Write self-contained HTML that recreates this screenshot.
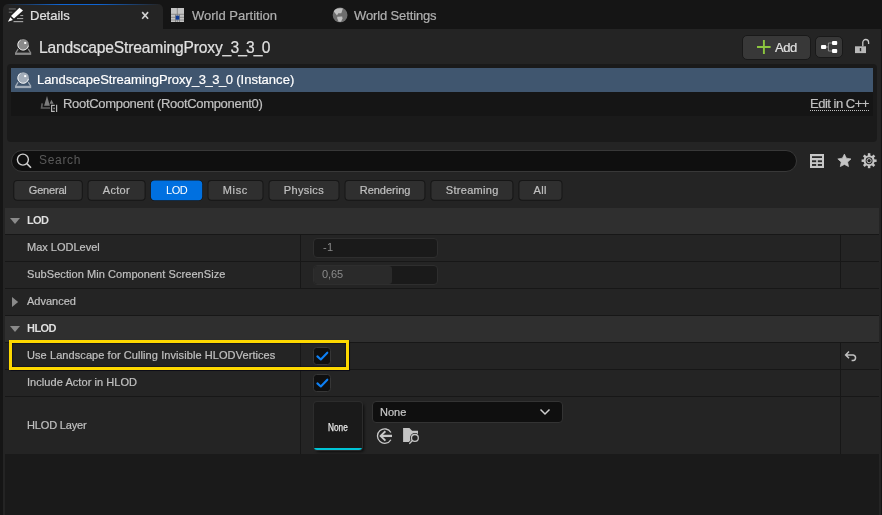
<!DOCTYPE html>
<html><head><meta charset="utf-8">
<style>
*{box-sizing:border-box;margin:0;padding:0}
html,body{width:882px;height:515px;overflow:hidden;background:#151515}
body{will-change:transform;position:relative;font-family:"Liberation Sans",sans-serif;color:#c0c0c0;font-size:12px}
.abs{position:absolute}
.t{position:absolute;white-space:nowrap;line-height:1;-webkit-text-stroke:0.2px}
svg{position:absolute;left:0;top:0;overflow:visible}
.fbt{top:185px;font-size:11px}
.row{position:absolute;left:5px;width:874px;height:26px;background:#242424}
.cat{background:#2f2f2f}
.lbl{position:absolute;left:22px;top:7px;font-size:11px;line-height:1;white-space:nowrap;color:#c0c0c0;-webkit-text-stroke:0.2px}
.cat .lbl{font-weight:bold;color:#e0e0e0;-webkit-text-stroke:0}
.vd{position:absolute;top:235px;width:1px;background:#171717}
.inp{position:absolute;left:313px;width:125px;height:20px;background:#1a1a1a;border:1px solid #2e2e2e;border-radius:4px;overflow:hidden}
.cb{position:absolute;left:313px;width:18px;height:18px;background:#0f0f0f;border:1px solid #363636;border-radius:3.5px}
</style></head><body>
<!-- panel bg -->
<div class="abs" style="left:3px;top:29px;width:878px;height:486px;background:#242424"></div>
<!-- active tab -->
<div class="abs" style="left:3px;top:4px;width:160px;height:26px;background:#242424;border-radius:5px 5px 0 0"></div>
<div class="abs" style="left:6px;top:4px;width:154px;height:1px;background:linear-gradient(90deg,rgba(15,100,210,0),#0f64d2 35%,#0f64d2 60%,rgba(15,100,210,0))"></div>
<span class="t" style="left:30px;top:9px;font-size:13px;color:#e0e0e0">Details</span>
<span class="t" style="left:192px;top:9px;font-size:13px;color:#b0b0b0">World Partition</span>
<span class="t" style="left:354px;top:9px;font-size:13px;color:#b0b0b0;letter-spacing:-0.13px">World Settings</span>
<!-- title -->
<span class="t" style="left:39px;top:40px;font-size:15.6px;color:#e0e0e0"><span style="letter-spacing:-0.16px">LandscapeStreamingProxy</span><span style="letter-spacing:-0.85px">_3_3_0</span></span>
<!-- Add button -->
<div class="abs" style="left:742px;top:35px;width:69px;height:25px;background:#383838;border:1px solid #191919;border-radius:5px"></div>
<span class="t" style="left:775px;top:41px;font-size:13px;color:#e0e0e0;letter-spacing:-0.4px">Add</span>
<div class="abs" style="left:815px;top:36px;width:28px;height:22px;background:#383838;border:1px solid #191919;border-radius:5px"></div>
<!-- tree box -->
<div class="abs" style="left:7px;top:64px;width:870px;height:78px;background:#1a1a1a;border-radius:4px"></div>
<div class="abs" style="left:11px;top:68px;width:862px;height:24px;background:#40566f"></div>
<div class="abs" style="left:11px;top:92px;width:862px;height:24px;background:#151515"></div>
<span class="t" style="left:37px;top:73px;font-size:13px;color:#ffffff"><span style="letter-spacing:-0.05px">LandscapeStreamingProxy</span><span style="letter-spacing:-0.47px">_3_3_0</span><span style="letter-spacing:0.03px"> (Instance)</span></span>
<span class="t" style="left:63px;top:97px;font-size:13px;color:#c0c0c0;letter-spacing:-0.31px">RootComponent (RootComponent0)</span>
<span class="t" style="left:810px;top:97px;font-size:13px;color:#c0c0c0;letter-spacing:-0.5px">Edit in C++</span>
<div class="abs" style="left:810px;top:110px;width:59px;height:0;border-top:1px dotted #c0c0c0"></div>
<!-- search -->
<div class="abs" style="left:11px;top:150px;width:786px;height:22px;background:#0f0f0f;border:1px solid #383838;border-radius:11px"></div>
<span class="t" style="left:39px;top:154px;font-size:12px;color:#5a5a5a;letter-spacing:0.68px;-webkit-text-stroke:0">Search</span>
<!-- filter buttons -->
<svg width="882" height="515" viewBox="0 0 882 515">
<rect x="13.3" y="180.1" width="69.5" height="20.6" rx="4" fill="#161616"/><rect x="14.3" y="181.1" width="67.5" height="18.6" rx="3" fill="#2f2f2f"/>
<rect x="87.5" y="180.1" width="58.1" height="20.6" rx="4" fill="#161616"/><rect x="88.5" y="181.1" width="56.1" height="18.6" rx="3" fill="#2f2f2f"/>
<rect x="150.4" y="180" width="52.2" height="20.8" rx="4" fill="#121212"/><rect x="150.9" y="180.6" width="51.3" height="19.6" rx="3.6" fill="#0070e0"/>
<rect x="207.5" y="180.1" width="56.0" height="20.6" rx="4" fill="#161616"/><rect x="208.5" y="181.1" width="54.0" height="18.6" rx="3" fill="#2f2f2f"/>
<rect x="268.5" y="180.1" width="71.0" height="20.6" rx="4" fill="#161616"/><rect x="269.5" y="181.1" width="69.0" height="18.6" rx="3" fill="#2f2f2f"/>
<rect x="344.5" y="180.1" width="80.9" height="20.6" rx="4" fill="#161616"/><rect x="345.5" y="181.1" width="78.9" height="18.6" rx="3" fill="#2f2f2f"/>
<rect x="430.4" y="180.1" width="83.0" height="20.6" rx="4" fill="#161616"/><rect x="431.4" y="181.1" width="81.0" height="18.6" rx="3" fill="#2f2f2f"/>
<rect x="518.4" y="180.1" width="44.1" height="20.6" rx="4" fill="#161616"/><rect x="519.4" y="181.1" width="42.1" height="18.6" rx="3" fill="#2f2f2f"/>
</svg>
<span class="t fbt" id="fb_General" style="letter-spacing:-0.19px;left:28.8px;color:#c0c0c0">General</span>
<span class="t fbt" id="fb_Actor" style="letter-spacing:0.28px;left:102.8px;color:#c0c0c0">Actor</span>
<span class="t fbt" id="fb_LOD" style="-webkit-text-stroke:0;letter-spacing:-0.37px;left:165.9px;color:#fff">LOD</span>
<span class="t fbt" id="fb_Misc" style="letter-spacing:0.65px;left:222.8px;color:#c0c0c0">Misc</span>
<span class="t fbt" id="fb_Physics" style="letter-spacing:0.33px;left:283.8px;color:#c0c0c0">Physics</span>
<span class="t fbt" id="fb_Rendering" style="letter-spacing:0.0px;left:359.7px;color:#c0c0c0">Rendering</span>
<span class="t fbt" id="fb_Streaming" style="letter-spacing:0.29px;left:445.8px;color:#c0c0c0">Streaming</span>
<span class="t fbt" id="fb_All" style="letter-spacing:0.33px;left:533.6px;color:#c0c0c0">All</span>
<!-- rows -->
<div class="abs" style="left:5px;top:208px;width:874px;height:246px;background:#171717"></div>
<div class="row cat" style="top:208px"><span class="lbl" style="letter-spacing:-0.7px">LOD</span></div>
<div class="row" style="top:235px"><span class="lbl">Max LODLevel</span></div>
<div class="row" style="top:262px"><span class="lbl" style="letter-spacing:0.06px">SubSection Min Component ScreenSize</span></div>
<div class="row" style="top:289px"><span class="lbl">Advanced</span></div>
<div class="row cat" style="top:316px"><span class="lbl" style="letter-spacing:-0.55px">HLOD</span></div>
<div class="row" style="top:343px"><span class="lbl" style="letter-spacing:0.08px">Use Landscape for Culling Invisible HLODVertices</span></div>
<div class="row" style="top:370px"><span class="lbl" style="letter-spacing:0.06px">Include Actor in HLOD</span></div>
<div class="row" style="top:397px;height:57px"><span class="lbl" style="top:23px;letter-spacing:-0.16px">HLOD Layer</span></div>
<!-- column dividers -->
<div class="vd" style="left:300px;height:53px"></div>
<div class="vd" style="left:840px;height:53px"></div>
<div class="vd" style="left:300px;top:343px;height:111px"></div>
<div class="vd" style="left:840px;top:343px;height:111px"></div>
<!-- inputs -->
<div class="inp" style="top:238px"></div>
<span class="t" style="left:323px;top:242px;font-size:11px;color:#8a8a8a;-webkit-text-stroke:0;letter-spacing:0.3px">-1</span>
<div class="inp" style="top:265px"><div style="position:absolute;left:0;top:0;width:78px;height:18px;background:#2a2a2a;border-radius:3px"></div></div>
<span class="t" style="left:322px;top:269px;font-size:11px;color:#8a8a8a;-webkit-text-stroke:0;letter-spacing:-0.1px">0,65</span>
<!-- checkboxes -->
<div class="cb" style="top:347px"></div>
<div class="cb" style="top:374px"></div>
<!-- highlight -->
<div class="abs" style="left:9px;top:340px;width:340px;height:30px;border:3px solid #fdd800;box-shadow:0 0 1px 0.5px #0c0c18, inset 0 0 1px 0.5px #0c0c18"></div>
<!-- HLOD layer -->
<div class="abs" style="left:314px;top:402px;width:48px;height:48px;background:#1a1a1a;border-radius:3px;box-shadow:0 0 0 1px #2c2c2c, 2px 2px 3px rgba(0,0,0,.65);overflow:hidden"><div style="position:absolute;left:0;bottom:0;width:48px;height:2px;background:#00c4d6"></div></div>
<span class="t" style="left:327.6px;top:422.5px;font-size:10.2px;color:#e8e8e8;transform:scaleX(0.81);transform-origin:0 0;-webkit-text-stroke:0.25px">None</span>
<div class="abs" style="left:372px;top:401px;width:191px;height:22px;background:#0f0f0f;border:1px solid #333;border-radius:4px"></div>
<span class="t" style="left:380px;top:407px;font-size:11px;color:#c8c8c8">None</span>
<!-- bottom -->
<div class="abs" style="left:5px;top:454px;width:874px;height:61px;background:#1a1a1a"></div>

<svg width="882" height="515" viewBox="0 0 882 515">
<!-- details tab icon -->
<g>
<rect x="8.8" y="8.2" width="7" height="1.5" fill="#5a5a5a"/>
<rect x="8.8" y="11.6" width="3.5" height="1.3" fill="#5a5a5a"/>
<rect x="20.3" y="15" width="2.9" height="1.1" fill="#a0a0a0"/>
<rect x="17" y="18" width="6.2" height="1.1" fill="#a0a0a0"/>
<rect x="13.5" y="21" width="9.7" height="1.2" fill="#a0a0a0"/>
<polygon points="19.4,7.8 23,10.6 14,18.5 11,16.1" fill="#fff"/>
<polygon points="10.4,17.3 12.9,19.9 7.9,21.8" fill="#fff"/>
</g>
<!-- close x -->
<path d="M142.2 12.1 L148.1 18.7 M148.1 12.1 L142.2 18.7" stroke="#d0d0d0" stroke-width="1.6" fill="none"/>
<!-- world partition icon -->
<g>
<rect x="171" y="8" width="13" height="14" fill="#c4c4c4"/>
<path d="M177.3 8 V22 M171 14.3 H184 M171 17.3 H175.5 M179.5 17.3 H184 M175.5 14.3 V22 M179.5 14.3 V22 M171 20 H184" stroke="#7c7c7c" stroke-width="0.8" fill="none"/>
<rect x="175.7" y="15.6" width="3.6" height="4" fill="#123c94"/>
</g>
<!-- globe -->
<g>
<circle cx="340.1" cy="14.9" r="7.4" fill="#6e6e6e"/>
<path d="M333.8 11.5 C335 9 338 7.8 342.9 8.6 L341.3 13.3 L338.3 13.2 L337 15.5 Z" fill="#c0c0c0"/>
<path d="M337.2 16.7 L342.2 16.5 L342.5 18.5 L341 21.8 L338.6 21.8 L337.3 18.5 Z" fill="#c0c0c0"/>
</g>
<!-- actor icon title -->
<g id="actor">
<path d="M18.2 48.8 L15.7 53 M28.2 48.8 L30.7 53" stroke="#8a8a8a" stroke-width="1.3" fill="none"/>
<rect x="15" y="52.6" width="16.2" height="2.3" fill="#8a8a8a"/>
<circle cx="23.2" cy="44.7" r="6.4" fill="#222"/>
<circle cx="23.2" cy="44.7" r="5.7" fill="#8a8a8a"/>
<path d="M20.6 40.1 A5.3 5.3 0 1 0 28.4 45.6" stroke="#ececec" stroke-width="1" fill="none"/>
<rect x="24.2" y="41.9" width="2" height="2" fill="#fff"/>
</g>
<g transform="translate(0,33.2)">
<path d="M18.2 48.8 L15.7 53 M28.2 48.8 L30.7 53" stroke="#a3adb9" stroke-width="1.3" fill="none"/>
<rect x="15" y="52.6" width="16.2" height="2.3" fill="#a3adb9"/>
<circle cx="23.2" cy="44.7" r="6.4" fill="#3c5068"/>
<circle cx="23.2" cy="44.7" r="5.7" fill="#a3adb9"/>
<path d="M20.6 40.1 A5.3 5.3 0 1 0 28.4 45.6" stroke="#f4f6f8" stroke-width="1" fill="none"/>
<rect x="24.2" y="41.9" width="2" height="2" fill="#fff"/>
</g>
<!-- component icon -->
<g>
<path d="M42.2 103.4 L41.6 108 H50" stroke="#606060" stroke-width="1.7" fill="none"/>
<polygon points="47,96 49.9,105.8 44.1,105.8" fill="#7c7c7c"/>
<polygon points="51.4,99.8 53.6,103.7 49.6,103.7" fill="#7c7c7c"/>
<path d="M54.8 105.3 H51.6 V111.4 H54.8 M56.6 104.8 V112" stroke="#b4b4b4" stroke-width="1.2" fill="none"/>
<rect x="53.3" y="107.6" width="1.6" height="1.6" fill="#8a8a8a"/>
</g>
<!-- plus -->
<path d="M757 47 H770.6 M763.9 40 V54" stroke="#8cc63f" stroke-width="1.9" fill="none"/>
<!-- hierarchy -->
<g>
<path d="M826 47 H828.4 M832 43 H828.4 V51 H832" stroke="#9a9a9a" stroke-width="0.9" fill="none"/>
<rect x="821" y="45" width="5.2" height="4" rx="1" fill="#fff"/>
<rect x="832" y="41" width="5.2" height="4" rx="1" fill="#fff"/>
<rect x="832" y="49" width="5.2" height="4" rx="1" fill="#fff"/>
</g>
<!-- lock -->
<g>
<rect x="855" y="46.3" width="11" height="6.8" fill="#b8b8b8"/>
<rect x="859.8" y="48" width="1.4" height="3.2" fill="#2a2a2a"/>
<path d="M862.8 46.3 V42.4 A2.9 2.9 0 0 1 868.6 42.4 V44" stroke="#c8c8c8" stroke-width="1.3" fill="none"/>
</g>
<!-- search icon -->
<g>
<circle cx="22.9" cy="159.6" r="5.5" stroke="#d0d0d0" stroke-width="1.4" fill="none"/>
<path d="M26.9 163.6 L31 167.7" stroke="#d0d0d0" stroke-width="1.6" fill="none"/>
</g>
<!-- table icon -->
<g>
<rect x="810" y="154" width="14" height="14" fill="#c8c8c8"/>
<rect x="812" y="156.2" width="10" height="1.8" fill="#2a2a2a"/>
<rect x="812" y="160.3" width="4.2" height="1.9" fill="#2a2a2a"/>
<rect x="817.8" y="160.3" width="4.2" height="1.9" fill="#2a2a2a"/>
<rect x="812" y="164" width="4.2" height="1.9" fill="#2a2a2a"/>
<rect x="817.8" y="164" width="4.2" height="1.9" fill="#2a2a2a"/>
</g>
<!-- star -->
<polygon fill="#c4c4c4" stroke="#c4c4c4" stroke-width="0.7" stroke-linejoin="round" points="844.4,154.1 846.4,158.2 851.0,158.9 847.6,162.1 848.5,166.6 844.4,164.4 840.3,166.6 841.2,162.1 837.8,158.9 842.4,158.2"/>
<!-- gear -->
<g><rect x="867.85" y="153.2" width="2.5" height="2.8" fill="#c4c4c4" transform="rotate(0 869.1 160.7)"/><rect x="867.85" y="153.2" width="2.5" height="2.8" fill="#c4c4c4" transform="rotate(45 869.1 160.7)"/><rect x="867.85" y="153.2" width="2.5" height="2.8" fill="#c4c4c4" transform="rotate(90 869.1 160.7)"/><rect x="867.85" y="153.2" width="2.5" height="2.8" fill="#c4c4c4" transform="rotate(135 869.1 160.7)"/><rect x="867.85" y="153.2" width="2.5" height="2.8" fill="#c4c4c4" transform="rotate(180 869.1 160.7)"/><rect x="867.85" y="153.2" width="2.5" height="2.8" fill="#c4c4c4" transform="rotate(225 869.1 160.7)"/><rect x="867.85" y="153.2" width="2.5" height="2.8" fill="#c4c4c4" transform="rotate(270 869.1 160.7)"/><rect x="867.85" y="153.2" width="2.5" height="2.8" fill="#c4c4c4" transform="rotate(315 869.1 160.7)"/><circle cx="869.1" cy="160.7" r="4.5" fill="none" stroke="#c4c4c4" stroke-width="2.1"/><circle cx="869.1" cy="160.7" r="2.1" fill="none" stroke="#c4c4c4" stroke-width="1"/></g>
<!-- triangles -->
<polygon points="10,218 20,218 15,224" fill="#8a8a8a"/>
<polygon points="10,326 20,326 15,332" fill="#8a8a8a"/>
<polygon points="12,297 18.2,302 12,307" fill="#8a8a8a"/>
<!-- checks -->
<path d="M317.4 356.4 L320.8 359.5 L327.3 352.7" stroke="#0e80f4" stroke-width="2.1" fill="none" stroke-linecap="round" stroke-linejoin="round"/>
<path d="M317.4 383.4 L320.8 386.5 L327.3 379.7" stroke="#0e80f4" stroke-width="2.1" fill="none" stroke-linecap="round" stroke-linejoin="round"/>
<!-- reset -->
<path d="M849 351.4 L845.6 354.9 L849 358.3 M845.8 354.9 H853.2 A2.9 2.9 0 0 1 853.2 360.6 H851.6" stroke="#c0c0c0" stroke-width="1.5" fill="none"/>
<!-- chevron -->
<path d="M540.5 409.5 L545 414 L549.5 409.5" stroke="#d0d0d0" stroke-width="1.5" fill="none"/>
<!-- use selected -->
<g>
<path d="M390.9 432.5 A7.2 7.2 0 1 0 390.9 439.7" stroke="#c8c8c8" stroke-width="1.3" fill="none"/>
<path d="M385.4 431.2 L380.6 435.9 L385.4 440.6" stroke="#c8c8c8" stroke-width="1.9" fill="none"/>
<path d="M380.8 435.9 H392" stroke="#c8c8c8" stroke-width="2.3" fill="none"/>
</g>
<!-- browse -->
<g>
<path d="M403.1 428 H409.4 L412.1 430.8 H418 V442 H403.1 Z" fill="#c4c4c4"/>
<circle cx="414.9" cy="437.9" r="4.9" fill="#242424"/>
<path d="M412.2 440.8 L409.3 443.8" stroke="#242424" stroke-width="3.2"/>
<circle cx="414.9" cy="437.9" r="3.4" fill="#242424" stroke="#c4c4c4" stroke-width="1.3"/>
<path d="M412.4 440.5 L409.3 443.7" stroke="#c4c4c4" stroke-width="1.3"/>
</g>
</svg>
</body></html>
